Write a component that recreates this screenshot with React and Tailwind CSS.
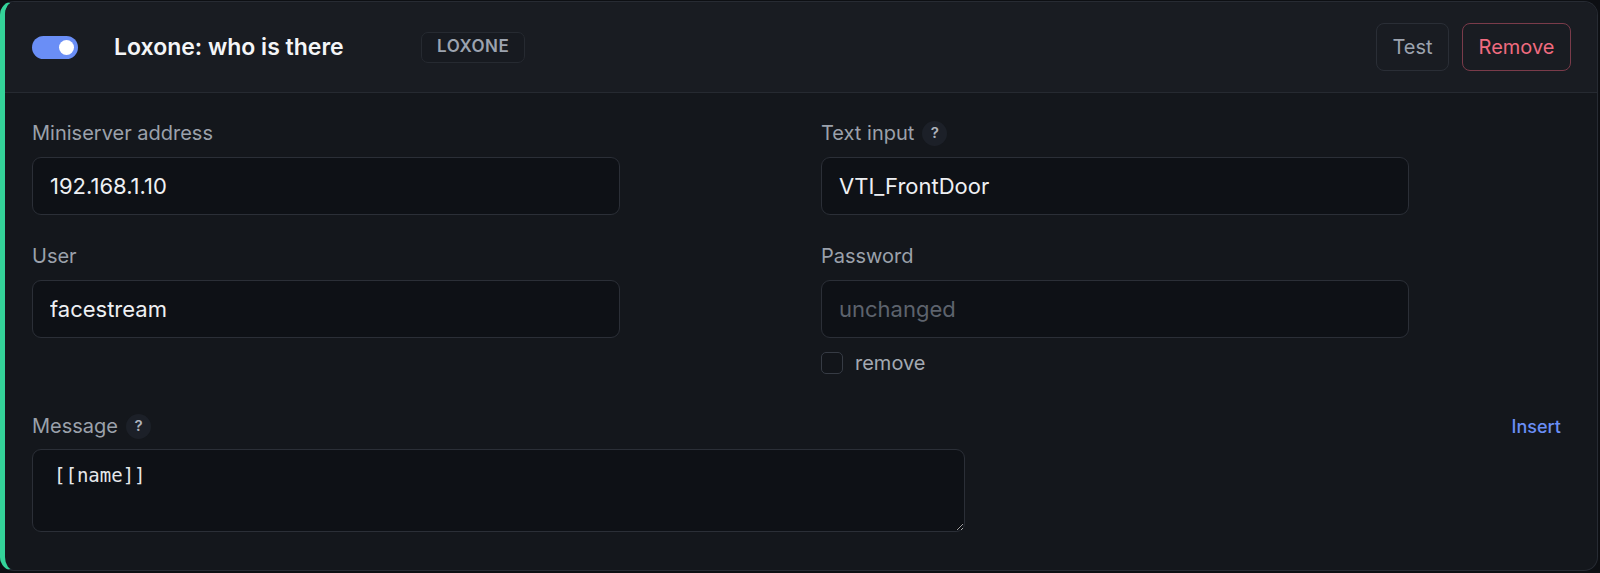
import { useState } from 'react';

const inputCls =
  'w-[588px] h-[58px] rounded-[9px] border border-[#2b2f37] bg-[#0e1116] px-[17px] text-[22px] text-[#eef0f3] placeholder-[#5d636d] outline-none';

function Help() {
  return (
    <span className="ml-[8px] flex h-[25px] w-[25px] items-center justify-center rounded-full bg-[#1c2028] text-[15px] font-semibold text-[#aeb3bc]">
      ?
    </span>
  );
}

function Field({ label, help, children }) {
  return (
    <div className="flex flex-col">
      <div className="flex h-[24px] items-center">
        <label className="text-[20px] leading-[24px] text-[#9ba1ab]">{label}</label>
        {help && <Help />}
      </div>
      <div className="mt-[12px]">{children}</div>
    </div>
  );
}

export default function App() {
  const [enabled, setEnabled] = useState(true);
  const [form, setForm] = useState({
    address: '192.168.1.10',
    textInput: 'VTI_FrontDoor',
    user: 'facestream',
    password: '',
    removePassword: false,
    message: '[[name]]'
  });

  const handleChange = (e) => {
    const { name, value, type, checked } = e.target;
    setForm(prev => ({ ...prev, [name]: type === 'checkbox' ? checked : value }));
  };

  return (
    <div className="min-h-screen bg-[#0d0f13] pt-px" style={{ fontFamily: 'Inter, "Noto Sans", sans-serif' }}>
      <div className="w-[1598px] h-[570px] overflow-hidden rounded-[14px] border border-[#272b33] border-l-[5px] border-l-[#34d399] bg-[#14171c]">
        {/* header */}
        <div className="flex h-[91px] items-center border-b border-[#262a31] bg-[#191c22] pl-[27px] pr-[26px]">
          <button
            onClick={() => setEnabled(!enabled)}
            className={`flex h-[23px] w-[46px] items-center rounded-full px-[4px] ${enabled ? 'justify-end bg-[#6a8ef6]' : 'justify-start bg-[#374151]'}`}
          >
            <span className="h-[15px] w-[15px] rounded-full bg-white"></span>
          </button>
          <h3 className="ml-[36px] w-[307px] text-[23px] font-semibold text-[#f4f5f7]">Loxone: who is there</h3>
          <span className="flex h-[31px] items-center rounded-[7px] border border-[#262a31] bg-[#171a20] px-[15px] text-[17px] font-semibold tracking-[0.03em] text-[#9ca3af]">
            LOXONE
          </span>
          <div className="ml-auto flex gap-[13px]">
            <button className="h-[48px] w-[73px] rounded-[8px] border border-[#2a2e36] text-[20px] text-[#9ca3af]">Test</button>
            <button className="h-[48px] w-[109px] rounded-[8px] border border-[#7a3b4a] text-[20px] text-[#f06b7f]">Remove</button>
          </div>
        </div>

        {/* body */}
        <div className="pl-[27px] pr-[36px] pt-[28px]">
          <div className="grid grid-cols-[789px_588px] gap-y-[29px]">
            <Field label="Miniserver address">
              <input name="address" value={form.address} onChange={handleChange} className={inputCls} />
            </Field>
            <Field label="Text input" help>
              <input name="textInput" value={form.textInput} onChange={handleChange} className={inputCls} />
            </Field>
            <Field label="User">
              <input name="user" value={form.user} onChange={handleChange} className={inputCls} />
            </Field>
            <div>
              <Field label="Password">
                <input
                  type="password"
                  name="password"
                  placeholder="unchanged"
                  value={form.password}
                  onChange={handleChange}
                  className={inputCls}
                />
              </Field>
              <label className="mt-[14px] flex items-center">
                <input
                  type="checkbox"
                  name="removePassword"
                  checked={form.removePassword}
                  onChange={handleChange}
                  className="h-[22px] w-[22px] appearance-none rounded-[5px] border border-[#363b44] bg-[#12151a]"
                />
                <span className="ml-[12px] text-[20px] leading-[22px] text-[#a3a9b2]">remove</span>
              </label>
            </div>
          </div>

          <div className="mt-[40px]">
            <div className="flex h-[24px] items-center justify-between">
              <div className="flex items-center">
                <label className="text-[20px] leading-[24px] text-[#9ba1ab]">Message</label>
                <Help />
              </div>
              <button className="text-[18px] font-medium text-[#6a8ef6]">Insert</button>
            </div>
            <textarea
              name="message"
              value={form.message}
              onChange={handleChange}
              className="mt-[11px] block h-[83px] w-[933px] rounded-[9px] border border-[#2b2f37] bg-[#0e1116] px-[21px] pt-[12px] text-[19px] leading-[27px] text-[#e6e8eb] outline-none"
              style={{ fontFamily: '"DejaVu Sans Mono", monospace' }}
            />
          </div>
        </div>
      </div>
    </div>
  );
}
